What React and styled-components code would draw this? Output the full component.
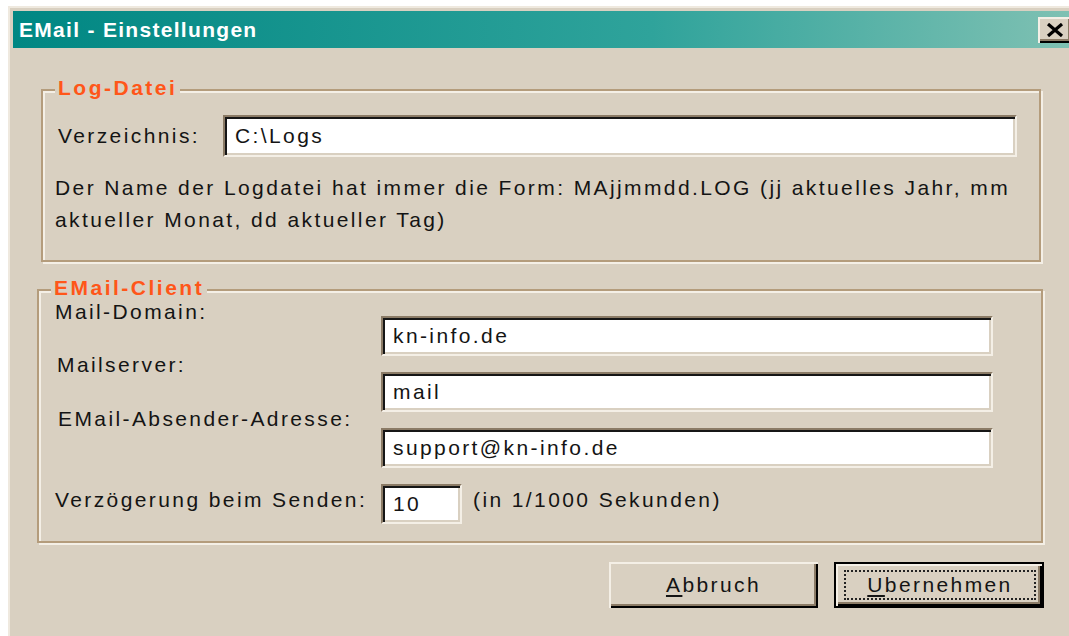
import styled, { createGlobalStyle } from "styled-components";

const GlobalStyle = createGlobalStyle`
  html, body {
    margin: 0;
    padding: 0;
    background: #ffffff;
    overflow: hidden;
  }
  body {
    font-family: "Liberation Sans", Arial, sans-serif;
  }
`;

const FACE = "#d9d0c1";
const LIGHT = "#f4efe6";
const SHADE = "#8b7b66";
const ETCH = "#b49c7c";

const Window = styled.div`
  box-sizing: border-box;
  width: 1071px;
  height: 640px;
  margin: 6px 0 0 8px;
  padding: 3px;
  background: ${FACE};
  border-left: 2px solid #efe9df;
  border-top: 2px solid #efe9df;
  display: flex;
  flex-direction: column;
`;

const TitleBar = styled.div`
  height: 37px;
  flex-shrink: 0;
  display: flex;
  align-items: center;
  justify-content: space-between;
  padding: 0 4px 0 6px;
  background: linear-gradient(to right, #008783 0%, #2fa39b 60%, #80c1b3 100%);
`;

const Caption = styled.span`
  color: #ffffff;
  font-weight: bold;
  font-size: 21px;
  letter-spacing: 1.3px;
`;

const CloseButton = styled.button`
  width: 34px;
  height: 26px;
  margin-top: 1px;
  padding: 0;
  border: none;
  background: ${FACE};
  box-shadow: inset 2px 2px ${LIGHT}, inset -2px -2px #000, inset -4px -4px ${SHADE};
  display: flex;
  align-items: center;
  justify-content: center;
`;

const Group = styled.section`
  position: relative;
  box-sizing: border-box;
  width: ${(p) => p.$w}px;
  height: ${(p) => p.$h}px;
  margin: ${(p) => p.$mt}px 0 0 ${(p) => p.$ml}px;
  padding: ${(p) => p.$pt}px 0 0 ${(p) => p.$pl}px;
  border: 2px solid ${ETCH};
  box-shadow: inset 2px 2px ${LIGHT}, 2px 2px ${LIGHT};
`;

const GroupTitle = styled.span`
  position: absolute;
  top: -12px;
  left: 12px;
  padding: 0 3px;
  background: ${FACE};
  color: #ff5619;
  font-weight: bold;
  font-size: 21px;
  line-height: 18px;
  letter-spacing: 2.5px;
`;

const Label = styled.span`
  font-size: 21px;
  line-height: ${(p) => p.$lh || 24}px;
  letter-spacing: 2.4px;
  color: #141414;
  white-space: nowrap;
  margin-top: ${(p) => p.$mt || 0}px;
  margin-left: ${(p) => p.$ml || 0}px;
`;

const PathRow = styled.div`
  display: flex;
  align-items: center;
`;

const PathLabel = styled(Label)`
  width: 165px;
`;

const TextField = styled.input`
  box-sizing: border-box;
  width: ${(p) => p.$w}px;
  height: ${(p) => p.$h}px;
  padding: 0 0 0 10px;
  margin: 0;
  background: #ffffff;
  border: 2px solid;
  border-color: ${SHADE} ${LIGHT} ${LIGHT} ${SHADE};
  box-shadow: inset 2px 2px #161616, inset -2px -2px ${FACE};
  font-family: "Liberation Sans", Arial, sans-serif;
  font-size: 21px;
  letter-spacing: 2.4px;
  color: #141414;
  outline: none;
`;

const Note = styled.p`
  margin: 15px 0 0 -3px;
  font-size: 21px;
  line-height: 32px;
  letter-spacing: 2.4px;
  color: #141414;
  white-space: nowrap;
`;

const FormGrid = styled.div`
  display: flex;
  flex-direction: column;
  gap: 16px;
`;

const FormRow = styled.div`
  display: grid;
  grid-template-columns: 326px auto 1fr;
  align-items: start;
`;

const Hint = styled(Label)`
  margin-left: 11px;
`;

const ButtonBar = styled.div`
  display: flex;
  justify-content: flex-end;
  gap: 16px;
  margin-top: 19px;
  padding-right: 32px;
`;

const PushButton = styled.button`
  box-sizing: border-box;
  width: ${(p) => p.$w}px;
  height: 46px;
  padding: 0;
  background: ${FACE};
  border: ${(p) => (p.$default ? "2px solid #000" : "none")};
  box-shadow: inset 2px 2px ${LIGHT}, inset -2px -2px #000, inset -4px -4px ${SHADE};
  display: flex;
  align-items: center;
  justify-content: center;
  font-family: "Liberation Sans", Arial, sans-serif;
  font-size: 21px;
  letter-spacing: 2.4px;
  color: #141414;
`;

const FocusFrame = styled.span`
  box-sizing: border-box;
  width: calc(100% - 14px);
  height: 30px;
  margin-left: 2px;
  border: 2px dotted #222;
  display: flex;
  align-items: center;
  justify-content: center;
`;

const Mnemonic = styled.span`
  text-decoration: underline;
  text-decoration-thickness: 2px;
  text-underline-offset: 3px;
`;

const CloseGlyph = () => (
  <svg width="18" height="14" viewBox="0 0 18 14">
    <path d="M2 1 L16 13 M16 1 L2 13" stroke="#000" strokeWidth="3.2" fill="none" />
  </svg>
);

const fields = [
  { label: "Mail-Domain:", value: "kn-info.de", mt: -14, ml: 0 },
  { label: "Mailserver:", value: "mail", mt: -17, ml: 2 },
  { label: "EMail-Absender-Adresse:", value: "support@kn-info.de", mt: -19, ml: 3 },
];

export default function App() {
  return (
    <>
      <GlobalStyle />
      <Window>
        <TitleBar>
          <Caption>EMail - Einstellungen</Caption>
          <CloseButton aria-label="Schließen">
            <CloseGlyph />
          </CloseButton>
        </TitleBar>

        <Group $w={1000} $h={173} $mt={41} $ml={28} $pt={24} $pl={15}>
          <GroupTitle>Log-Datei</GroupTitle>
          <PathRow>
            <PathLabel>Verzeichnis:</PathLabel>
            <TextField $w={794} $h={42} defaultValue="C:\Logs" />
          </PathRow>
          <Note>
            Der Name der Logdatei hat immer die Form: MAjjmmdd.LOG (jj aktuelles Jahr, mm
            <br />
            aktueller Monat, dd aktueller Tag)
          </Note>
        </Group>

        <Group $w={1006} $h={254} $mt={27} $ml={24} $pt={25} $pl={16}>
          <GroupTitle>EMail-Client</GroupTitle>
          <FormGrid>
            {fields.map((f) => (
              <FormRow key={f.label}>
                <Label $lh={20} $mt={f.mt} $ml={f.ml}>{f.label}</Label>
                <TextField $w={612} $h={40} defaultValue={f.value} />
              </FormRow>
            ))}
            <FormRow>
              <Label $lh={20} $mt={6}>Verzögerung beim Senden:</Label>
              <TextField $w={81} $h={40} defaultValue="10" />
              <Hint $lh={20} $mt={6}>(in 1/1000 Sekunden)</Hint>
            </FormRow>
          </FormGrid>
        </Group>

        <ButtonBar>
          <PushButton $w={209}>
            <span>
              <Mnemonic>A</Mnemonic>bbruch
            </span>
          </PushButton>
          <PushButton $w={210} $default>
            <FocusFrame>
              <span>
                <Mnemonic>U</Mnemonic>bernehmen
              </span>
            </FocusFrame>
          </PushButton>
        </ButtonBar>
      </Window>
    </>
  );
}
